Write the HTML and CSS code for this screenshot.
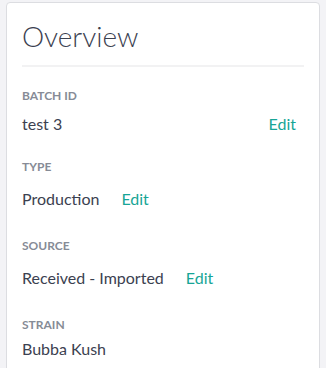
FILE: index.html
```html
<!DOCTYPE html>
<html lang="en">
<head>
    <meta charset="UTF-8">
    <meta name="viewport" content="width=device-width, initial-scale=1.0">
    <title>Overview</title>
    <link rel="stylesheet" href="styles.css">
</head>
<body>
    <div class="card">
        <h1>Overview</h1>

        <div class="field">
            <div class="label">Batch ID</div>
            <div class="row row-spread">
                <span class="value">test 3</span>
                <a class="edit edit-small" href="#">Edit</a>
            </div>
        </div>

        <div class="field">
            <div class="label">Type</div>
            <div class="row">
                <span class="value">Production</span>
                <a class="edit" href="#">Edit</a>
            </div>
        </div>

        <div class="field">
            <div class="label">Source</div>
            <div class="row">
                <span class="value">Received - Imported</span>
                <a class="edit" href="#">Edit</a>
            </div>
        </div>

        <div class="field">
            <div class="label">Strain</div>
            <div class="row">
                <span class="value">Bubba Kush</span>
            </div>
        </div>
    </div>
</body>
</html>
```

FILE: styles.css
```css
body {
    font-family: Lato, "Open Sans", sans-serif;
    background-color: #f3f3f6;
    margin: 0;
    padding: 2px 6px 0;
}
.card {
    background-color: #ffffff;
    border: 1px solid #dcdde1;
    border-radius: 4px;
    padding: 16px 15px 30px;
}
h1 {
    font-size: 28px;
    font-weight: 300;
    line-height: 34px;
    color: #3b4150;
    margin: 0 0 21px;
    padding-bottom: 12px;
    border-bottom: 2px solid #f2f2f3;
}
.field {
    margin-bottom: 21px;
}
.label {
    font-size: 12px;
    font-weight: 700;
    line-height: 16px;
    text-transform: uppercase;
    color: #868b96;
    margin-bottom: 6px;
}
.row {
    display: flex;
    align-items: center;
}
.row-spread {
    justify-content: space-between;
}
.value {
    font-size: 16px;
    line-height: 20px;
    color: #3b4150;
}
.edit {
    font-size: 16px;
    line-height: 20px;
    color: #17a596;
    text-decoration: none;
    padding: 8px;
    margin-left: 14px;
}
.edit-small {
    padding: 4px 8px;
}
```
